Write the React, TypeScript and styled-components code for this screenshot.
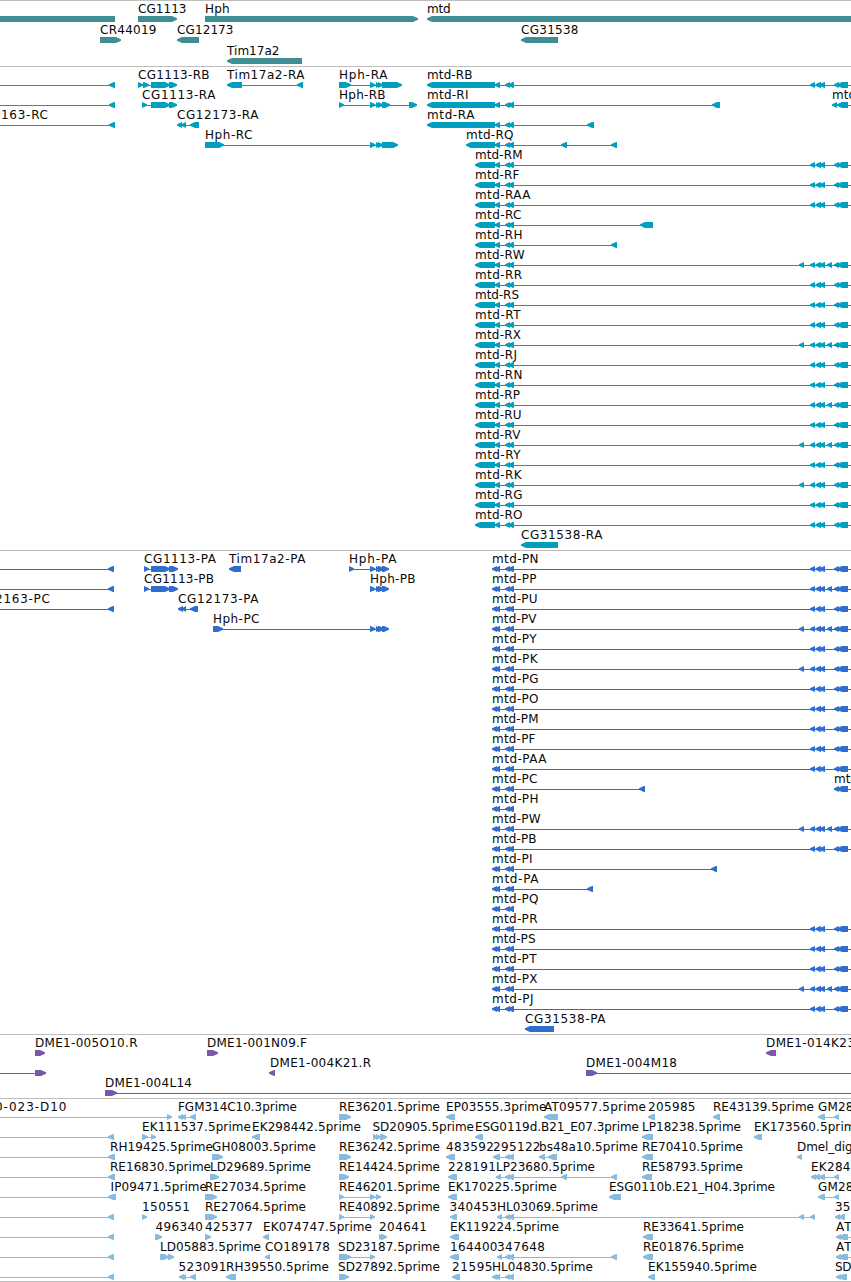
import React from 'react';
import styled, { createGlobalStyle } from 'styled-components';

const GlobalStyle = createGlobalStyle`
  body {
    margin: 0;
    background: #fff;
    overflow: hidden;
  }
`;

type Span = [number, number];
type Direction = 'left' | 'right';

interface Feature {
  label: string;
  x: number;
  end: number; // right edge of the label; 0 keeps the natural width
  dir: Direction;
  exons: Span[];
  from?: number;
  to?: number;
}

interface TrackData {
  color: string;
  rowHeight: number;
  tail: number;
  rows: Feature[][];
}

const OFF_LEFT = -20;
const OFF_RIGHT = 870;

const L = (label: string, x: number, end: number, exons: Span[], to?: number): Feature => ({
  label, x, end, dir: 'left', exons, to,
});
const R = (label: string, x: number, end: number, exons: Span[], to?: number): Feature => ({
  label, x, end, dir: 'right', exons, to,
});
const incoming = (dir: Direction, exon: Span, label = '', x = 0, end = 0): Feature => ({
  label, x, end, dir, exons: [exon], from: OFF_LEFT,
});

const PAIR: Span[] = [[505, 510], [508, 514]];

/* Distal exons shared by most mtd isoforms, with the two optional ones */
const distal = (kind: string): Span[] => [
  ...(kind.includes('a') ? ([[799, 804]] as Span[]) : []),
  [810, 815], [815.5, 821], [819.5, 825],
  ...(kind.includes('b') ? ([[827, 832]] as Span[]) : []),
  [834, 839], [837, 848],
];

const mtdR = (s: string, end: number, kind = '', start = 475): Feature =>
  L(`mtd-${s}`, start, end, [[start, 495], [494.5, 500], ...PAIR, ...distal(kind)], OFF_RIGHT);
const mtdRShort = (s: string, start: number, end: number, last: Span[]): Feature =>
  L(`mtd-${s}`, start, end, [[start, 495], [494.5, 500], ...PAIR, ...last]);
const P_HEAD: Span[] = [[492, 497], [494.5, 500], ...PAIR];
const mtdP = (s: string, end: number, kind = ''): Feature =>
  L(`mtd-${s}`, 492, end, [...P_HEAD, ...distal(kind)], OFF_RIGHT);
const mtdPShort = (s: string, end: number, last: Span[] = []): Feature =>
  L(`mtd-${s}`, 492, end, [...P_HEAD, ...last]);

const HPH_CDS: Span[] = [[370, 375.5], [376, 381], [378, 384], [382, 389]];

const tracks: TrackData[] = [
  {
    color: '#408e94',
    rowHeight: 21,
    tail: 2,
    rows: [
      [
        L('', 0, 0, [[OFF_LEFT, 115]]),
        R('CG1113', 138, 186, [[138, 177]]),
        R('Hph', 205, 229, [[205, 418]]),
        L('mtd', 427, 450, [[427, OFF_RIGHT]]),
      ],
      [
        R('CR44019', 100, 156, [[100, 121]]),
        L('CG12173', 177, 233, [[177, 199]]),
        L('CG31538', 521, 578, [[521, 558]]),
      ],
      [L('Tim17a2', 227, 279, [[227, 302]])],
    ],
  },
  {
    color: '#009fbf',
    rowHeight: 20,
    tail: 3,
    rows: [
      [
        incoming('left', [109, 115]),
        R('CG1113-RB', 138, 209, [[138, 143], [143, 149], [151, 170], [169, 177]]),
        L('Tim17a2-RA', 227, 304, [[227, 242], [297, 303]]),
        R('Hph-RA', 339, 387, [[339, 351], [370, 375.5], [376, 380], [378, 383], [382, 402]]),
        mtdR('RB', 472, '', 427),
      ],
      [
        incoming('left', [109, 115]),
        R('CG1113-RA', 142, 215, [[142, 147], [151, 170], [169, 177]]),
        R('Hph-RB', 339, 385, [[339, 344], [370, 375.5], [376, 380], [378, 383], [382, 390], [409, 417]]),
        mtdRShort('RI', 427, 468, [[712, 720]]),
        L('mtd-RD', 832, 0, [[832, 837], [837, 848]], OFF_RIGHT),
      ],
      [
        incoming('left', [109, 115], '163-RC', 1, 47.5),
        L('CG12173-RA', 177, 258, [[177, 182], [181, 186], [190, 199]]),
        mtdRShort('RA', 427, 474, [[587, 594]]),
      ],
      [
        R('Hph-RC', 205, 252, [[205, 224], [370, 375.5], [376, 380], [378, 383], [382, 398]]),
        mtdRShort('RQ', 466, 513, [[561, 567], [611, 617]]),
      ],
      [mtdR('RM', 522)],
      [mtdR('RF', 519)],
      [mtdR('RAA', 530)],
      [mtdRShort('RC', 475, 521, [[640, 653]])],
      [mtdRShort('RH', 475, 522, [[611, 617]])],
      [mtdR('RW', 524, 'a b')],
      [mtdR('RR', 521.5)],
      [mtdR('RS', 518.5)],
      [mtdR('RT', 520)],
      [mtdR('RX', 520.5, 'a b')],
      [mtdR('RJ', 516.5)],
      [mtdR('RN', 522)],
      [mtdR('RP', 519.5, 'b')],
      [mtdR('RU', 521)],
      [mtdR('RV', 520, 'a b')],
      [mtdR('RY', 520)],
      [mtdR('RK', 521, 'a')],
      [mtdR('RG', 522)],
      [mtdR('RO', 522)],
      [L('CG31538-RA', 521, 602, [[521, 558]])],
    ],
  },
  {
    color: '#316dcd',
    rowHeight: 20,
    tail: 3,
    rows: [
      [
        incoming('left', [108, 114]),
        R('CG1113-PA', 144, 215.5, [[144, 149], [151, 170], [169, 178]]),
        L('Tim17a2-PA', 229, 305, [[229, 241]]),
        R('Hph-PA', 349, 396, [[349, 354], ...HPH_CDS]),
        mtdP('PN', 538),
      ],
      [
        incoming('left', [108, 114]),
        R('CG1113-PB', 144, 213.5, [[144, 149], [151, 170], [169, 178]]),
        R('Hph-PB', 370, 415, HPH_CDS),
        mtdP('PP', 536, 'b'),
      ],
      [
        incoming('left', [108, 114], '2163-PC', -5, 49.5),
        L('CG12173-PA', 178, 258, [[178, 183], [182, 186], [190, 198]]),
        mtdP('PU', 537),
      ],
      [R('Hph-PC', 213, 259, [[213, 223], ...HPH_CDS]), mtdP('PV', 536, 'a b')],
      [mtdP('PY', 536)],
      [mtdP('PK', 537, 'a')],
      [mtdP('PG', 538)],
      [mtdP('PO', 538)],
      [mtdP('PM', 538)],
      [mtdP('PF', 535)],
      [mtdP('PAA', 546)],
      [
        mtdPShort('PC', 537, [[639, 645]]),
        L('mtd-PD', 834, 0, [[834, 839], [837, 848]], OFF_RIGHT),
      ],
      [mtdPShort('PH', 538)],
      [mtdP('PW', 540, 'a b')],
      [mtdP('PB', 536)],
      [mtdPShort('PI', 532, [[711, 717]])],
      [mtdPShort('PA', 538, [[587, 593]])],
      [mtdPShort('PQ', 538)],
      [mtdP('PR', 537)],
      [mtdP('PS', 535)],
      [mtdP('PT', 536)],
      [mtdP('PX', 537, 'a b')],
      [mtdP('PJ', 533)],
      [L('CG31538-PA', 525, 605, [[525, 554]])],
    ],
  },
  {
    color: '#7859a8',
    rowHeight: 20,
    tail: 3,
    rows: [
      [
        R('DME1-005O10.R', 35, 137, [[35, 45]]),
        R('DME1-001N09.F', 207, 306.5, [[207, 218]]),
        L('DME1-014K23.F', 766, 866, [[766, 776]]),
      ],
      [
        incoming('right', [35, 46]),
        L('DME1-004K21.R', 270, 370.5, [[269, 275]]),
        R('DME1-004M18', 586, 676.5, [[586, 597]], OFF_RIGHT),
      ],
      [R('DME1-004L14', 105, 191.5, [[105, 117]], OFF_RIGHT)],
    ],
  },
  {
    color: '#88bbdd',
    rowHeight: 20,
    tail: 2,
    rows: [
      [
        incoming('right', [167, 172], '0-023-D10', -5, 66),
        L('FGM314C10.3prime', 178, 296.5, [[178, 183], [181, 186], [190, 196]]),
        R('RE36201.5prime', 339, 439.5, [[339, 351]]),
        L('EP03555.3prime', 446, 546, [[446, 455]]),
        L('AT09577.5prime', 544, 645.5, [[544, 558]]),
        L('205985', 648, 695, [[648, 655]]),
        L('RE43139.5prime', 713, 813.5, [[713, 720]]),
        L('GM28613.5prime', 818, 924, [[818, 825], [834, 839]]),
      ],
      [
        incoming('left', [108, 114]),
        R('EK111537.5prime', 142, 250.5, [[142, 148], [151, 156]]),
        L('EK298442.5prime', 252, 360.5, [[252, 260]]),
        R('SD20905.5prime', 372.5, 473.5, [[373, 378], [376, 381], [380, 387]]),
        L('ESG0119d.B21_E07.3prime', 475, 638.5, [[475, 483]]),
        L('LP18238.5prime', 642, 740.5, [[642, 653]]),
        L('EK173560.5prime', 754, 862.5, [[754, 762]]),
      ],
      [
        incoming('left', [108, 115], 'RH19425.5prime', 110, 212.5),
        R('GH08003.5prime', 212, 315.5, [[212, 223]]),
        R('RE36242.5prime', 339, 439.5, [[339, 351]]),
        L('483592', 446, 493.5, [[446, 455]]),
        L('295122', 493, 540, [[493, 500], ...PAIR]),
        L('bs48a10.5prime', 539, 637.5, [[539, 545], [548, 557]]),
        L('RE70410.5prime', 642, 742.5, [[642, 653]]),
        L('Dmel_dig', 797, 852, [[797, 802]]),
      ],
      [
        incoming('left', [108, 115], 'RE16830.5prime', 110, 210.5),
        R('LD29689.5prime', 210, 310.5, [[210, 219]]),
        R('RE14424.5prime', 339, 439.5, [[339, 349]]),
        L('228191', 448, 495.5, [[448, 457]]),
        L('LP23680.5prime', 496, 594.5, [[496, 501], ...PAIR, [561, 567], [611, 617]]),
        L('RE58793.5prime', 642, 742.5, [[642, 652]]),
        L('EK284', 811, 850, [[811, 816], [814.5, 820], [819, 825], [834, 839]]),
      ],
      [
        incoming('left', [108, 116], 'IP09471.5prime', 110.5, 206.5),
        R('RE27034.5prime', 205, 305.5, [[205, 217]]),
        R('RE46201.5prime', 339, 439.5, [[339, 344], [370, 375.5], [376, 381]]),
        L('EK170225.5prime', 448, 556.5, [[448, 457]]),
        L('ESG0110b.E21_H04.3prime', 609, 774.5, [[609, 621]]),
        L('GM28613.3prime', 818, 924, [[818, 825], [834, 839]]),
      ],
      [
        incoming('left', [108, 114]),
        R('150551', 142, 189.5, [[142, 147]]),
        R('RE27064.5prime', 205, 305.5, [[205, 217]]),
        R('RE40892.5prime', 339, 439.5, [[339, 344], [370, 375]]),
        L('340453', 449.5, 496.5, [[450, 457]]),
        L('HL03069.5prime', 497, 597.5, [[497, 502], ...PAIR, [799, 804], [810, 815]]),
        L('35', 835, 850, [[835, 840], [838.5, 845]]),
      ],
      [
        incoming('left', [108, 114]),
        R('496340', 155.5, 202.5, [[155, 162]]),
        R('425377', 205, 252.5, [[205, 211]]),
        L('EK074747.5prime', 263, 371.5, [[263, 269]]),
        R('204641', 379, 426.5, [[379, 383], [381, 387]]),
        L('EK119224.5prime', 450, 558.5, [[450, 459]]),
        L('RE33641.5prime', 643, 743.5, [[643, 653]]),
        L('AT', 836, 851, [[836, 841], [838.5, 848]], OFF_RIGHT),
      ],
      [
        incoming('left', [108, 114]),
        R('LD05883.5prime', 160, 260.5, [[160, 169], [168, 174]]),
        L('CO189178', 265, 329.5, [[265, 270]]),
        R('SD23187.5prime', 338, 439.5, [[339, 351], [370, 375]]),
        L('164400', 450, 497, [[450, 459]]),
        L('347648', 497, 544.5, [[497, 502], ...PAIR, [611, 617]]),
        L('RE01876.5prime', 643, 743.5, [[643, 653]]),
        L('AT', 836, 851, [[836, 841], [838.5, 848]], OFF_RIGHT),
      ],
      [
        incoming('left', [108, 114]),
        L('523091', 178.5, 226, [[179, 184], [181.5, 186], [190, 196]]),
        L('RH39550.5prime', 226, 328.5, [[226, 236]]),
        R('SD27892.5prime', 338, 439.5, [[339, 349]]),
        L('21595', 452, 492, [[452, 460]]),
        L('HL04830.5prime', 492, 592.5, [[492, 497], [494.5, 500], ...PAIR]),
        L('EK155940.5prime', 648, 756.5, [[648, 655]]),
        L('SD', 835, 851, [[836, 841], [838.5, 847]]),
      ],
    ],
  },
];

const Browser = styled.main`
  display: flex;
  flex-direction: column;
  width: 851px;
  height: 1282px;
  overflow: hidden;
  background: #fff;
`;

const Track = styled.section<{ $tail: number }>`
  display: flex;
  flex-direction: column;
  flex: none;
  border-top: 1px solid #bebebe;
  padding-bottom: ${(p) => p.$tail}px;
`;

const RowChart = styled.svg<{ $height: number; $color: string }>`
  display: block;
  flex: none;
  width: 851px;
  height: ${(p) => p.$height}px;
  overflow: visible;
  color: ${(p) => p.$color};
`;

const Label = styled.text`
  font-family: 'DejaVu Sans', 'Noto Sans', sans-serif;
  font-size: 12px;
  fill: #080808;
`;

const Intron = styled.rect`
  fill: currentColor;
  shape-rendering: crispEdges;
`;

const Exon = styled.polygon`
  fill: currentColor;
`;

const BottomRule = styled.div`
  flex: none;
  height: 1px;
  background: #bebebe;
`;

const TOP = 15;

/* Exon box whose leading end narrows to a point */
const arrowPoints = ([a, b]: Span, dir: Direction): string => {
  const head = Math.min(5, b - a);
  const mid = TOP + 3;
  const tip = dir === 'left' ? a : b;
  const back = dir === 'left' ? b : a;
  const neck = dir === 'left' ? a + head : b - head;
  const upper: Span[] = [
    [tip, 0.7],
    [neck, 3],
    [back, 3],
  ];
  const lower = [...upper].reverse();
  return [
    ...upper.map(([x, h]) => `${x},${mid - h}`),
    ...lower.map(([x, h]) => `${x},${mid + h}`),
  ].join(' ');
};

function FeatureGlyph({ feature }: { feature: Feature }) {
  const { label, x, end, dir, exons, from, to } = feature;
  const start = from ?? exons[0][0];
  const stop = to ?? exons[exons.length - 1][1];
  const hasIntron = exons.length > 1 || from !== undefined || to !== undefined;
  return (
    <g>
      {hasIntron && <Intron x={start + 1} y={TOP + 3} width={stop - start - 2} height={1} />}
      {exons.map((exon, i) => (
        <Exon key={i} points={arrowPoints(exon, dir)} />
      ))}
      {label && (
        <Label x={x} y={12} textLength={end ? end - x + 0.5 : undefined}>
          {label}
        </Label>
      )}
    </g>
  );
}

export default function App() {
  return (
    <>
      <GlobalStyle />
      <Browser>
        {tracks.map((track, t) => (
          <Track key={t} $tail={track.tail}>
            {track.rows.map((row, r) => (
              <RowChart key={r} $height={track.rowHeight} $color={track.color}>
                {row.map((feature, i) => (
                  <FeatureGlyph key={i} feature={feature} />
                ))}
              </RowChart>
            ))}
          </Track>
        ))}
        <BottomRule />
      </Browser>
    </>
  );
}
